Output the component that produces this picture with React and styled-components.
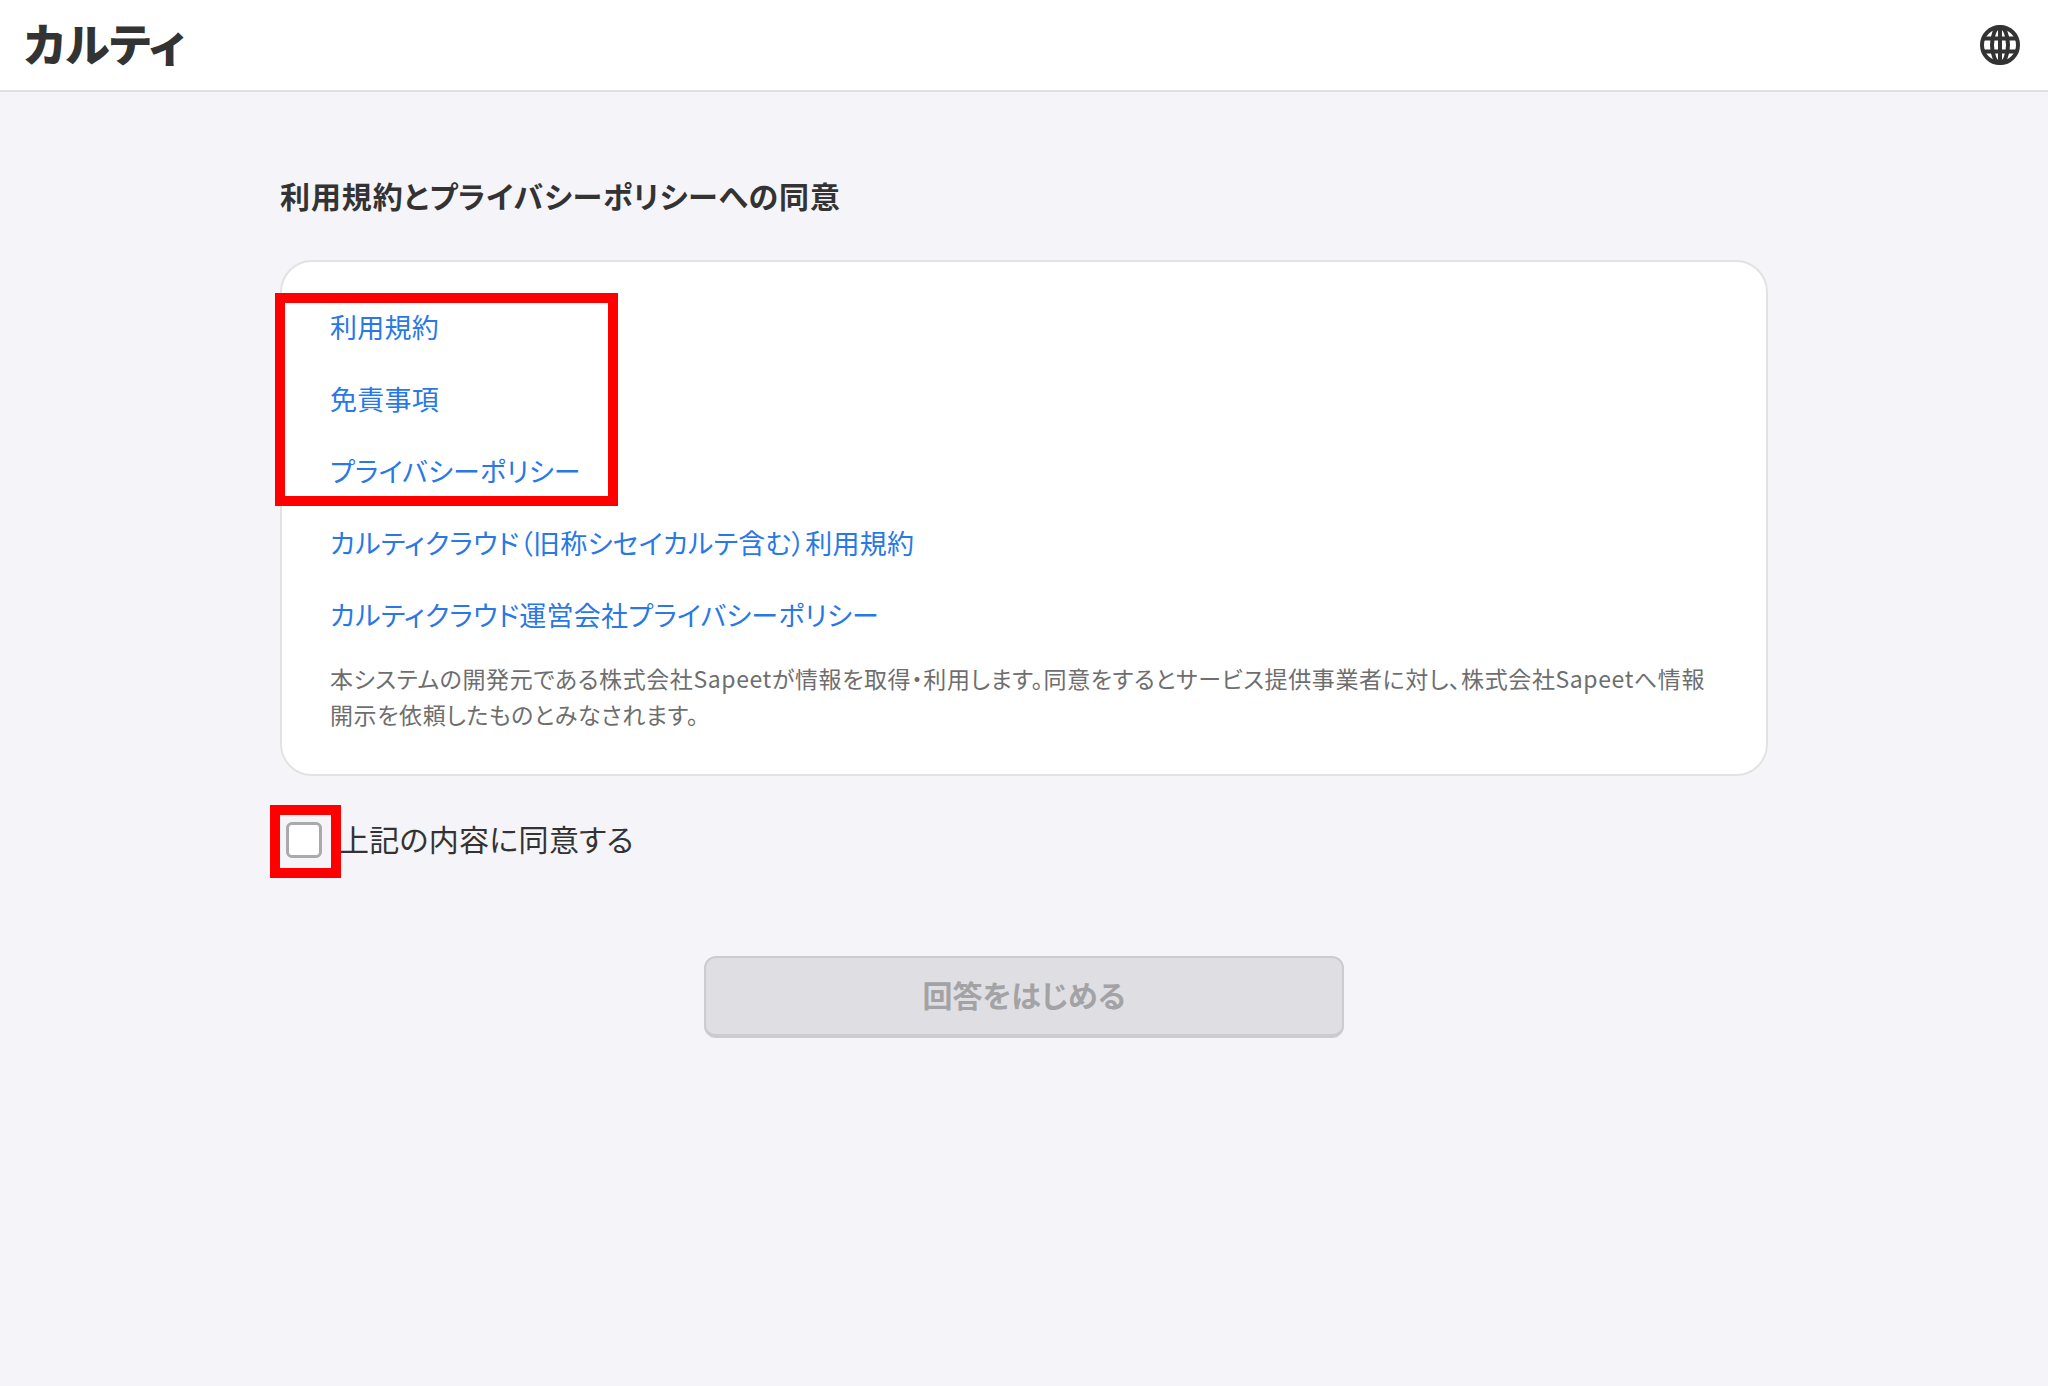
import React from 'react'
import styled, { createGlobalStyle } from 'styled-components'

const links = [
  '利用規約',
  '免責事項',
  'プライバシーポリシー',
  'カルティクラウド（旧称シセイカルテ含む）利用規約',
  'カルティクラウド運営会社プライバシーポリシー',
]

const GlobeIcon = () => (
  <svg width="42" height="42" viewBox="0 0 42 42" fill="none" stroke="#333" strokeWidth="4">
    <circle cx="21" cy="21" r="18" />
    <ellipse cx="21" cy="21" rx="8" ry="18" />
    <path d="M21 3v36M4 14.5h34M4 27.5h34" />
  </svg>
)

export default function App() {
  return (
    <Page>
      <GlobalStyle />
      <Header>
        <Logo>カルティ</Logo>
        <GlobeIcon />
      </Header>
      <Main>
        <Title>利用規約とプライバシーポリシーへの同意</Title>
        <Card>
          <LinkList>
            <Highlight />
            {links.map(x => (
              <TermsLink key={x}>{x}</TermsLink>
            ))}
          </LinkList>
          <Note>
            本システムの開発元である株式会社Sapeetが情報を取得・利用します。同意をするとサービス提供事業者に対し、株式会社Sapeetへ情報開示を依頼したものとみなされます。
          </Note>
        </Card>
        <AgreeRow>
          <CheckboxWrap>
            <Checkbox />
          </CheckboxWrap>
          <AgreeText>上記の内容に同意する</AgreeText>
        </AgreeRow>
        <StartButton disabled>回答をはじめる</StartButton>
      </Main>
    </Page>
  )
}

const GlobalStyle = createGlobalStyle`
  html, body {
    margin: 0;
    background: #f5f4f9;
  }
  * {
    box-sizing: border-box;
  }
`

const Page = styled.div`
  min-height: 1386px;
  background: #f5f4f9;
  color: #333;
  font-family: 'Noto Sans CJK JP', 'Noto Sans', sans-serif;
  font-feature-settings: 'palt';
`

const Header = styled.header`
  height: 92px;
  background: #fff;
  border-bottom: 2px solid #e0e0e2;
  display: flex;
  align-items: center;
  justify-content: space-between;
  padding: 0 27px 0 24px;
`

const Logo = styled.div`
  font-size: 45px;
  font-weight: 900;
  line-height: 1;
  padding-bottom: 5px;
  color: #333;
`

const Main = styled.main`
  width: 1488px;
  margin: 0 auto;
  padding-top: 83px;
`

const Title = styled.h1`
  margin: 0 0 45px;
  font-size: 30px;
  line-height: 40px;
  font-weight: 700;
  letter-spacing: 0.9px;
  color: #333;
`

const Card = styled.section`
  height: 516px;
  background: #fff;
  border: 2px solid #e2e2e4;
  border-radius: 32px;
  padding: 28px 48px 0;
`

const LinkList = styled.div`
  position: relative;
  display: flex;
  flex-direction: column;
`

const Highlight = styled.div`
  position: absolute;
  left: -55px;
  top: 3px;
  width: 343px;
  height: 213px;
  border: 10px solid #f00;
`

const TermsLink = styled.a`
  height: 72px;
  display: flex;
  align-items: center;
  font-size: 27px;
  letter-spacing: 0.25px;
  color: #2878e6;
`

const Note = styled.p`
  margin: 10px 0 0;
  font-size: 23px;
  line-height: 36px;
  letter-spacing: 0.6px;
  color: #6e6e6e;
`

const AgreeRow = styled.label`
  display: flex;
  align-items: center;
  height: 73px;
  margin-top: 29px;
  font-size: 30px;
  letter-spacing: 0.3px;
  color: #333;
`

const AgreeText = styled.span`
  margin-left: -2px;
  padding-bottom: 7px;
`

const CheckboxWrap = styled.span`
  width: 71px;
  height: 73px;
  margin-left: -10px;
  border: 10px solid #f00;
  display: flex;
  align-items: center;
  justify-content: center;
  background: #f5f4f9;
  flex: none;
`

const Checkbox = styled.span`
  width: 36px;
  height: 36px;
  margin: 0 3px 3px 0;
  background: #fff;
  border: 3px solid #aaa;
  border-radius: 6px;
`

const StartButton = styled.button`
  display: flex;
  align-items: center;
  justify-content: center;
  width: 640px;
  height: 82px;
  margin: 78px auto 0;
  padding-bottom: 5px;
  background: #dfdfe3;
  border: 2px solid #cbcbd0;
  border-bottom-width: 4px;
  border-radius: 12px;
  font-family: inherit;
  font-feature-settings: inherit;
  font-size: 30px;
  font-weight: 700;
  color: #a3a3a5;
`
